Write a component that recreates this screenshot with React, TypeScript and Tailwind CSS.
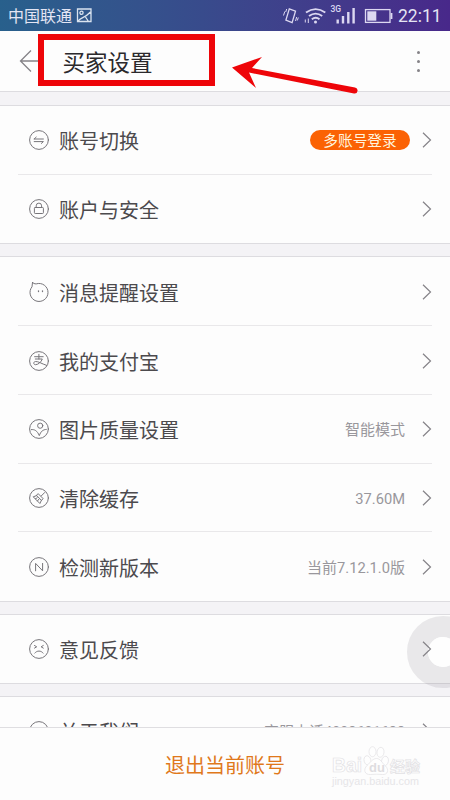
import React from "react";

type IconName = "switch" | "lock" | "message" | "pay" | "picture" | "clean" | "version" | "feedback" | "about";

function RowIcon({ name }: { name: IconName }) {
  return (
    <svg width="20" height="20" viewBox="0 0 20 20" fill="none" stroke="#77757a" strokeWidth="1" strokeLinecap="round" strokeLinejoin="round" className="shrink-0">
      {name === "message" ? (
        <path d="M3.500 .4C4.300 1.400 5.600 1.900 7.200 1.900A9 9 0 1 1 3 4.800C3.300 3.300 3.300 1.700 3.500 .4z" />
      ) : (
        <circle cx="10" cy="10" r="9.400" />
      )}
      {name === "switch" && <path d="M5.200 9h9.200M5.200 9l2-1.900M5.200 11.600h9.200l-2 1.800" />}
      {name === "lock" && (
        <>
          <rect x="5.400" y="8.500" width="9" height="6" rx=".8" />
          <path d="M7.200 8.500V6.800a2.700 2.700 0 0 1 5.400 0v1.700" />
        </>
      )}
      {name === "message" && <path d="M9.500 8.800v.7M13.500 8.800v.7" strokeWidth="1.300" />}
      {name === "pay" && <path d="M5.600 5.700h8.600M9.900 3.300v4.700M6.300 8h7c-1 2.900-4 5.700-6.800 5.700-2.200 0-2.500-3 .1-3.200 2.700-.2 5.700 2.100 11.100 3.900" />}
      {name === "picture" && (
        <>
          <circle cx="11.200" cy="6.700" r="2.600" />
          <path d="M2.300 10.600c3.200-.5 6 1.200 8 6 1.600-4.300 3.600-6 7-6.200" />
        </>
      )}
      {name === "clean" && <path d="M15.700 4.500l-3.400 3.400M9.400 5.900l4.800 4.800-1.800 1.600-4.700-4.700zM7.700 7.600l-3.500 1.200 6.700 6.700 1.500-3.200M6.400 10.800l1.800-1M8.500 12.900l1.300-1.600" />}
      {name === "version" && <path d="M6.600 13.800V6.400l7 7.400V6.400" />}
      {name === "feedback" && <path d="M5.500 6.500l2.200 1.300-2.200 1.300M14.300 6.500l-2.200 1.300 2.200 1.300M5.800 14.100c2-2.800 6.400-2.800 8.300 0" />}
      {name === "about" && <path d="M10 8v6" />}
    </svg>
  );
}

function Chevron() {
  return (
    <svg width="10" height="18" viewBox="0 0 10 18" fill="none" stroke="#858388" strokeWidth="1.200" className="relative z-10 ml-[17px] shrink-0">
      <path d="M1 1.700L8.500 9 1 16.300" />
    </svg>
  );
}

function Row({ icon, label, value, badge, line = false, height = "h-[69px]" }: { icon: IconName; label: string; value?: React.ReactNode; badge?: string; line?: boolean; height?: string }) {
  return (
    <div className={`ml-[18px] mr-[18px] flex shrink-0 items-center border-b pl-[11px] ${height} ${line ? "border-[#e9e8ea]" : "border-transparent"}`}>
      <RowIcon name={icon} />
      <span className="ml-2.5 mt-[4px] flex-1 whitespace-nowrap text-[20px] leading-6 text-[#4c4a4d]">{label}</span>
      {value && <span className="mt-0.5 whitespace-nowrap text-[15px] leading-5 text-[#99979c]">{value}</span>}
      {badge && <span className="-mr-[5px] flex h-5 w-[100px] items-center justify-center rounded-full bg-[#fb6204] pt-[2px] text-[14.700px] leading-5 text-[#fff5df]">{badge}</span>}
      <Chevron />
    </div>
  );
}

function Gap({ height = "h-[14px]" }: { height?: string }) {
  return <div className={`shrink-0 border-y border-[#dddce0] bg-[#f4f3f6] ${height}`} />;
}

function StatusIcons() {
  return (
    <svg width="120" height="31" viewBox="280 0 120 31" fill="none" stroke="#dcd8f1" strokeLinecap="butt">
      <path d="M289.300 8.800l6.200 2.300-3.400 11.500-6.200-2.500z" strokeWidth="1.300" />
      <path d="M284.800 11.500l-1.300 4M286.700 9l-1 3M296.700 17l-1.200 4M298.300 17.500l-1 3" strokeWidth="1" />
      <path d="M306 12.600q9.600-7 19.300 0M309 16q6.600-4.800 13.200 0M311.800 19.200q3.900-2.900 7.700 0" strokeWidth="1.900" />
      <circle cx="315.500" cy="22" r="1.500" fill="#dcd8f1" stroke="none" />
      <path d="M305.300 19.500v3M308.300 18.500v4.500" strokeWidth="1" />
      <path d="M337.700 19.500v4M343 16v7.500M348.300 12v11.500M353.600 8v15.500" strokeWidth="2.400" />
      <rect x="365.500" y="9.600" width="24.500" height="12.800" strokeWidth="1.300" />
      <rect x="367.300" y="11.300" width="9" height="9.400" fill="#dcd8f1" stroke="none" />
      <path d="M391.500 13v6" strokeWidth="1.800" />
      <text x="330.500" y="12" fill="#dcd8f1" stroke="none" className="font-['Roboto',sans-serif] text-[8.500px] font-medium">3G</text>
    </svg>
  );
}

function Watermark() {
  return (
    <svg width="92" height="46" viewBox="0 0 92 46" className="pointer-events-none absolute left-[331px] top-[17px]">
      <g fill="#fefefe" stroke="#e2e1e4" strokeWidth=".7">
        <text x="1" y="27" textLength="30" lengthAdjust="spacingAndGlyphs" className="font-['Liberation_Sans',sans-serif] text-[21px] font-bold">Bai</text>
        <ellipse cx="36.500" cy="15.500" rx="3.400" ry="4.800" transform="rotate(-15 36.500 15.500)" />
        <ellipse cx="41.500" cy="6.700" rx="3.500" ry="5" />
        <ellipse cx="49.500" cy="7.300" rx="3.500" ry="5" transform="rotate(8 49.500 7.300)" />
        <ellipse cx="54" cy="16" rx="3.400" ry="4.800" transform="rotate(12 54 16)" />
        <path d="M45.500 13.500c4 0 5.500 4.500 9 7.500 4 4 2 9-3 8.500-4-.4-8-.4-12 0-6 .5-7.500-5-3.500-9 3.500-3 5.500-7 9.500-7z" />
        <text x="38" y="27" fill="#dedde0" stroke="none" className="font-['Liberation_Sans',sans-serif] text-[13px] font-bold">du</text>
        <text x="59" y="27" className="font-['Noto_Sans_CJK_SC',sans-serif] text-[15px] font-bold">经验</text>
        <text x="1" y="39.500" textLength="87" lengthAdjust="spacingAndGlyphs" fill="#e6e5e8" stroke="none" className="font-['Liberation_Sans',sans-serif] text-[10.500px]">jingyan.baidu.com</text>
      </g>
    </svg>
  );
}

export default function App() {
  return (
    <main className="relative flex h-[800px] w-[450px] flex-col overflow-hidden bg-[#fdfdfd] font-['Roboto','Noto_Sans_CJK_SC',sans-serif]">
      <div className="flex h-[31px] shrink-0 items-center bg-gradient-to-r from-[#28608c] via-[#384b8c] via-45% to-[#48288a] pl-2 text-[#e4e5f4]">
        <span className="mt-0.5 whitespace-nowrap text-[16px] leading-6">中国联通</span>
        <svg width="16" height="15" viewBox="0 0 16 15" fill="none" stroke="#d9e3ef" strokeWidth="1.300" className="ml-[4px]">
          <path d="M1.500 1H15v12.500H1.500zM2 13.300C4 9.500 8.500 10.500 14.500 4M9.500 9l3 4.500" />
          <circle cx="5.500" cy="4.800" r="1.600" />
        </svg>
        <div className="ml-[188px] shrink-0"><StatusIcons /></div>
        <span className="-ml-[2px] mt-px text-[17.500px] leading-6">22:11</span>
      </div>

      <header className="flex h-[60px] shrink-0 items-center pl-[19px] pr-[30px]">
        <svg width="22" height="24" viewBox="0 0 22 24" fill="none" stroke="#858388" strokeWidth="1.300">
          <path d="M12 1.500L1.500 12 12 22.500M1.500 12H22" />
        </svg>
        <h1 className="ml-[21.500px] mt-[4px] flex-1 text-[22.500px] leading-8 text-[#2b292c]">买家设置</h1>
        <div className="flex flex-col gap-[6px]">
          <i className="size-[3px] rounded-full bg-[#858388]" />
          <i className="size-[3px] rounded-full bg-[#858388]" />
          <i className="size-[3px] rounded-full bg-[#858388]" />
        </div>
      </header>

      <Gap height="h-[15px]" />
      <Row icon="switch" label="账号切换" badge="多账号登录" line />
      <Row icon="lock" label="账户与安全" height="h-[68px]" />
      <Gap />
      <Row icon="message" label="消息提醒设置" height="h-[69px] pt-[2px]" line />
      <Row icon="pay" label="我的支付宝" height="h-[69px] pt-px" line />
      <Row icon="picture" label="图片质量设置" value="智能模式" line />
      <Row icon="clean" label="清除缓存" value={<span className="text-[14.700px]">37.60M</span>} height="h-[68px]" line />
      <Row icon="version" label="检测新版本" value={<>当前<span className="text-[14.700px]">7.12.1.0</span>版</>} height="h-[69px] pt-[2px]" />
      <Gap />
      <Row icon="feedback" label="意见反馈" height="h-[68px] pt-px" />
      <Gap />
      <div className="min-h-0 flex-1 overflow-hidden">
        <Row icon="about" label="关于我们" value={<>客服电话<span className="text-[14.400px]">4008601688</span></>} />
      </div>
      <footer className="relative z-20 flex h-[73px] shrink-0 items-center justify-center border-t border-[#dfdee1] bg-[#fdfdfd] pt-[4px] text-[20px] text-[#e0781b]">
        退出当前账号
        <Watermark />
      </footer>

      <div className="pointer-events-none absolute left-[38px] top-[34px] h-[52px] w-[177px] border-[6px] border-[#ee0509]" />
      <svg width="128" height="44" viewBox="0 0 128 44" className="pointer-events-none absolute left-[230px] top-[54px]">
        <path d="M2 13.500L32 3 22 14 125 33.500a3 3 0 0 1-1 6L19 18.500 26 34z" fill="#ee0509" />
      </svg>
      <div className="pointer-events-none absolute left-[407px] top-[616px] size-[72px] rounded-full border-[21px] border-[#77727e]/15">
        <div className="size-full rounded-full bg-[#fefefe]" />
      </div>
    </main>
  );
}
